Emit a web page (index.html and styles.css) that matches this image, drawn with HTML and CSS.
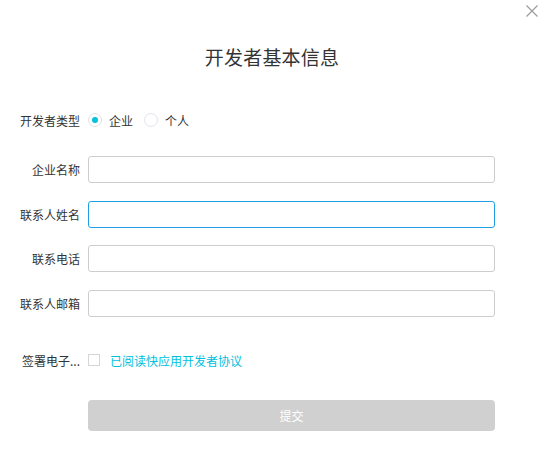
FILE: index.html
```html
<!DOCTYPE html>
<html lang="zh-CN">
<head>
<meta charset="utf-8">
<link rel="stylesheet" href="styles.css">
</head>
<body>
<div class="dialog">
  <button class="close" aria-label="关闭">
    <svg width="12" height="12" viewBox="0 0 12 12"><path d="M0.5 0.5 L11.5 11.5 M11.5 0.5 L0.5 11.5" stroke="#999" stroke-width="1.1" fill="none"/></svg>
  </button>
  <h1 class="title">开发者基本信息</h1>
  <form class="form">
    <div class="row row-radio">
      <label class="label">开发者类型</label>
      <div class="control radios">
        <span class="radio checked"></span><span class="radio-text">企业</span>
        <span class="radio"></span><span class="radio-text">个人</span>
      </div>
    </div>
    <div class="row row-input first">
      <label class="label">企业名称</label>
      <input class="control input" type="text">
    </div>
    <div class="row row-input">
      <label class="label">联系人姓名</label>
      <input class="control input focused" type="text">
    </div>
    <div class="row row-input">
      <label class="label">联系电话</label>
      <input class="control input" type="text">
    </div>
    <div class="row row-input">
      <label class="label">联系人邮箱</label>
      <input class="control input" type="text">
    </div>
    <div class="row row-check">
      <label class="label">签署电子...</label>
      <div class="control checks">
        <span class="checkbox"></span><a class="link">已阅读快应用开发者协议</a>
      </div>
    </div>
    <div class="row row-submit">
      <span class="label"></span>
      <button class="control submit" type="button">提交</button>
    </div>
  </form>
</div>
</body>
</html>
```

FILE: styles.css
```css
html, body {
  margin: 0;
  padding: 0;
  background: #fff;
}
body {
  font-family: "Noto Sans CJK SC", "Noto Sans", sans-serif;
  color: #333;
  font-size: 12px;
}
.dialog {
  position: relative;
  width: 545px;
  height: 464px;
  padding-top: 42px;
  box-sizing: border-box;
}
.close {
  position: absolute;
  top: 5px;
  left: 526px;
  width: 12px;
  height: 12px;
  padding: 0;
  border: 0;
  background: none;
  display: block;
}
.close svg { display: block; }
.title {
  margin: 0;
  height: 30px;
  line-height: 30px;
  font-size: 19px;
  font-weight: 400;
  text-align: center;
  color: #333;
  letter-spacing: 0.2px;
  padding-right: 1px;
}
.form {
  margin: 34px 0 0 20px;
}
.row {
  display: flex;
  align-items: center;
  gap: 8px;
}
.label {
  width: 60px;
  flex: none;
  text-align: right;
  white-space: nowrap;
  font-size: 12px;
  color: #333;
}
.control {
  width: 407px;
  box-sizing: border-box;
}
.row-radio { height: 28px; }
.radios {
  display: flex;
  align-items: center;
  height: 28px;
}
.radio {
  width: 14px;
  height: 14px;
  border: 1px solid #dfe3e8;
  border-radius: 50%;
  box-sizing: border-box;
  position: relative;
  flex: none;
}
.radio.checked::after {
  content: "";
  position: absolute;
  left: 3px;
  top: 3px;
  width: 6px;
  height: 6px;
  border-radius: 50%;
  background: #00c1de;
}
.radio-text {
  margin-left: 7px;
  margin-right: 11px;
}
.row-input { height: 27px; margin-top: 17.7px; }
.row-input.first { margin-top: 22px; }
.input {
  height: 27px;
  border: 1px solid #cdcdcd;
  border-radius: 3px;
  outline: none;
  padding: 0 8px;
  font: inherit;
  background: #fff;
}
.input.focused { border-color: #1f9fe6; }
.row-check { height: 28px; margin-top: 29px; }
.checks {
  display: flex;
  align-items: center;
  height: 28px;
}
.checkbox {
  width: 12px;
  height: 12px;
  border: 1px solid #d5d5d5;
  box-sizing: border-box;
  flex: none;
}
.link {
  margin-left: 10px;
  color: #00c1de;
  font-size: 12px;
  cursor: pointer;
}
.row-submit { margin-top: 26px; height: 30px; }
.submit {
  height: 31px;
  border: 0;
  border-radius: 4px;
  background: #d0d0d0;
  color: #fff;
  font: inherit;
  font-size: 12px;
  padding: 0;
}
```
